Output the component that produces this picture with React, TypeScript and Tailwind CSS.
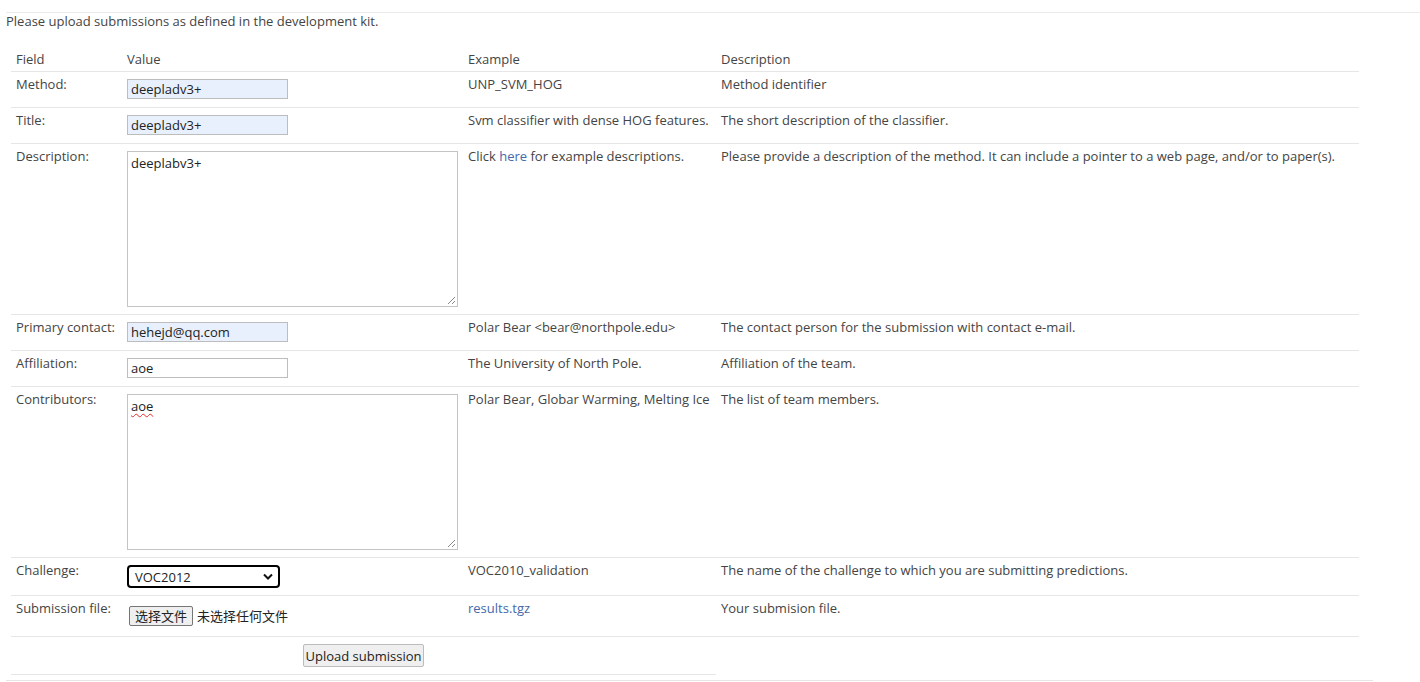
import React from 'react';

const font = "font-['Open_Sans','Noto_Sans_CJK_SC',sans-serif]";

function TextBox({ value, autofill }: { value: string; autofill?: boolean }) {
    return (
        <div className={`mt-[3px] mb-[3px] w-[161px] h-[20px] border border-[#bdbdbd] px-[3px] text-[13px] leading-[18px] text-[#222] ${autofill ? 'bg-[#e8f0fe]' : 'bg-white'}`}>
            {value}
        </div>
    );
}

function Area({ children }: { children: React.ReactNode }) {
    return (
        <div className="relative mt-[3px] mb-[2px] w-[331px] h-[156px] border border-[#c4c4c4] bg-white px-[3px] pt-[2px] text-[13px] leading-[18px] text-[#222]">
            {children}
            {/* resize grip */}
            <svg className="absolute right-[1px] bottom-[1px]" width="9" height="9" viewBox="0 0 9 9">
                <line x1="8" y1="1" x2="1" y2="8" stroke="#8a8a8a" strokeWidth="1" />
                <line x1="8" y1="5" x2="5" y2="8" stroke="#8a8a8a" strokeWidth="1" />
            </svg>
        </div>
    );
}

type Row = {
    field: string;
    value: React.ReactNode;
    example: React.ReactNode;
    description: string;
};

export default function App() {
    const rows: Row[] = [
        { field: 'Method:', value: <TextBox value="deepladv3+" autofill />, example: 'UNP_SVM_HOG', description: 'Method identifier' },
        { field: 'Title:', value: <TextBox value="deepladv3+" autofill />, example: 'Svm classifier with dense HOG features.', description: 'The short description of the classifier.' },
        {
            field: 'Description:',
            value: <Area>deeplabv3+</Area>,
            example: <>Click <a className="text-[#4469aa]">here</a> for example descriptions.</>,
            description: 'Please provide a description of the method. It can include a pointer to a web page, and/or to paper(s).',
        },
        { field: 'Primary contact:', value: <TextBox value="hehejd@qq.com" autofill />, example: 'Polar Bear <bear@northpole.edu>', description: 'The contact person for the submission with contact e-mail.' },
        { field: 'Affiliation:', value: <TextBox value="aoe" />, example: 'The University of North Pole.', description: 'Affiliation of the team.' },
        {
            field: 'Contributors:',
            value: <Area><span className="underline decoration-wavy decoration-[#e03030] decoration-1 underline-offset-2">aoe</span></Area>,
            example: 'Polar Bear, Globar Warming, Melting Ice',
            description: 'The list of team members.',
        },
        {
            field: 'Challenge:',
            value: (
                <div className="mt-[3px] mb-[2px] w-[153px] h-[23px] border-2 border-black rounded-[4px] bg-white flex items-center justify-between pl-[6px] pr-[5px] text-[13px] text-[#222]">
                    <span>VOC2012</span>
                    <svg width="10" height="7" viewBox="0 0 10 7">
                        <path d="M1 1.5 L5 5.5 L9 1.5" fill="none" stroke="#111" strokeWidth="2" />
                    </svg>
                </div>
            ),
            example: 'VOC2010_validation',
            description: 'The name of the challenge to which you are submitting predictions.',
        },
        {
            field: 'Submission file:',
            value: (
                <div className="mt-[6px] mb-[5px] flex items-center text-[13px] text-[#222]">
                    <button className="ml-[2px] h-[20px] px-[5px] border border-[#767676] rounded-[2px] bg-[#efefef] leading-[18px]">选择文件</button>
                    <span className="ml-[4px]">未选择任何文件</span>
                </div>
            ),
            example: <a className="text-[#4469aa]">results.tgz</a>,
            description: 'Your submision file.',
        },
    ];

    return (
        <div className={`${font} text-[13px] leading-[16px] text-[#444] bg-white min-h-[682px] pt-[12px]`}>
            <div className="ml-[6px] border-t border-[#ebebeb]">Please upload submissions as defined in the development kit.</div>

            <table className="ml-[11px] mt-[18px] w-[1348px] table-fixed border-collapse">
                <colgroup>
                    <col className="w-[111px]" />
                    <col className="w-[341px]" />
                    <col className="w-[253px]" />
                    <col className="w-[643px]" />
                </colgroup>
                <thead>
                    <tr className="border-b border-[#e6e6e6] text-left">
                        <th className="font-normal px-[5px] pt-[4px] pb-[4px]">Field</th>
                        <th className="font-normal px-[5px] pt-[4px] pb-[4px]">Value</th>
                        <th className="font-normal px-[5px] pt-[4px] pb-[4px]">Example</th>
                        <th className="font-normal px-[5px] pt-[4px] pb-[4px]">Description</th>
                    </tr>
                </thead>
                <tbody>
                    {rows.map((r, idx) => (
                        <tr key={idx} className="border-b border-[#e6e6e6] align-top">
                            <td className="px-[5px] pt-[4px] pb-[5px] whitespace-nowrap">{r.field}</td>
                            <td className="px-[5px] pt-[4px] pb-[5px]">{r.value}</td>
                            <td className="px-[5px] pt-[4px] pb-[5px] whitespace-nowrap">{r.example}</td>
                            <td className="px-[5px] pt-[4px] pb-[5px] whitespace-nowrap">{r.description}</td>
                        </tr>
                    ))}
                    <tr className="align-top">
                        <td colSpan={3} className="border-b border-[#e6e6e6] px-[5px] pt-[4px] pb-[5px] text-center">
                            <button className="mt-[3px] mb-[2px] h-[23px] w-[121px] border border-[#bcbcbc] rounded-[2px] bg-[#efefef] text-[13px] text-[#222]">Upload submission</button>
                        </td>
                        <td />
                    </tr>
                </tbody>
            </table>

            <div className="ml-[6px] mt-[5px] w-[1367px] border-t border-[#e6e6e6]" />
        </div>
    );
}
